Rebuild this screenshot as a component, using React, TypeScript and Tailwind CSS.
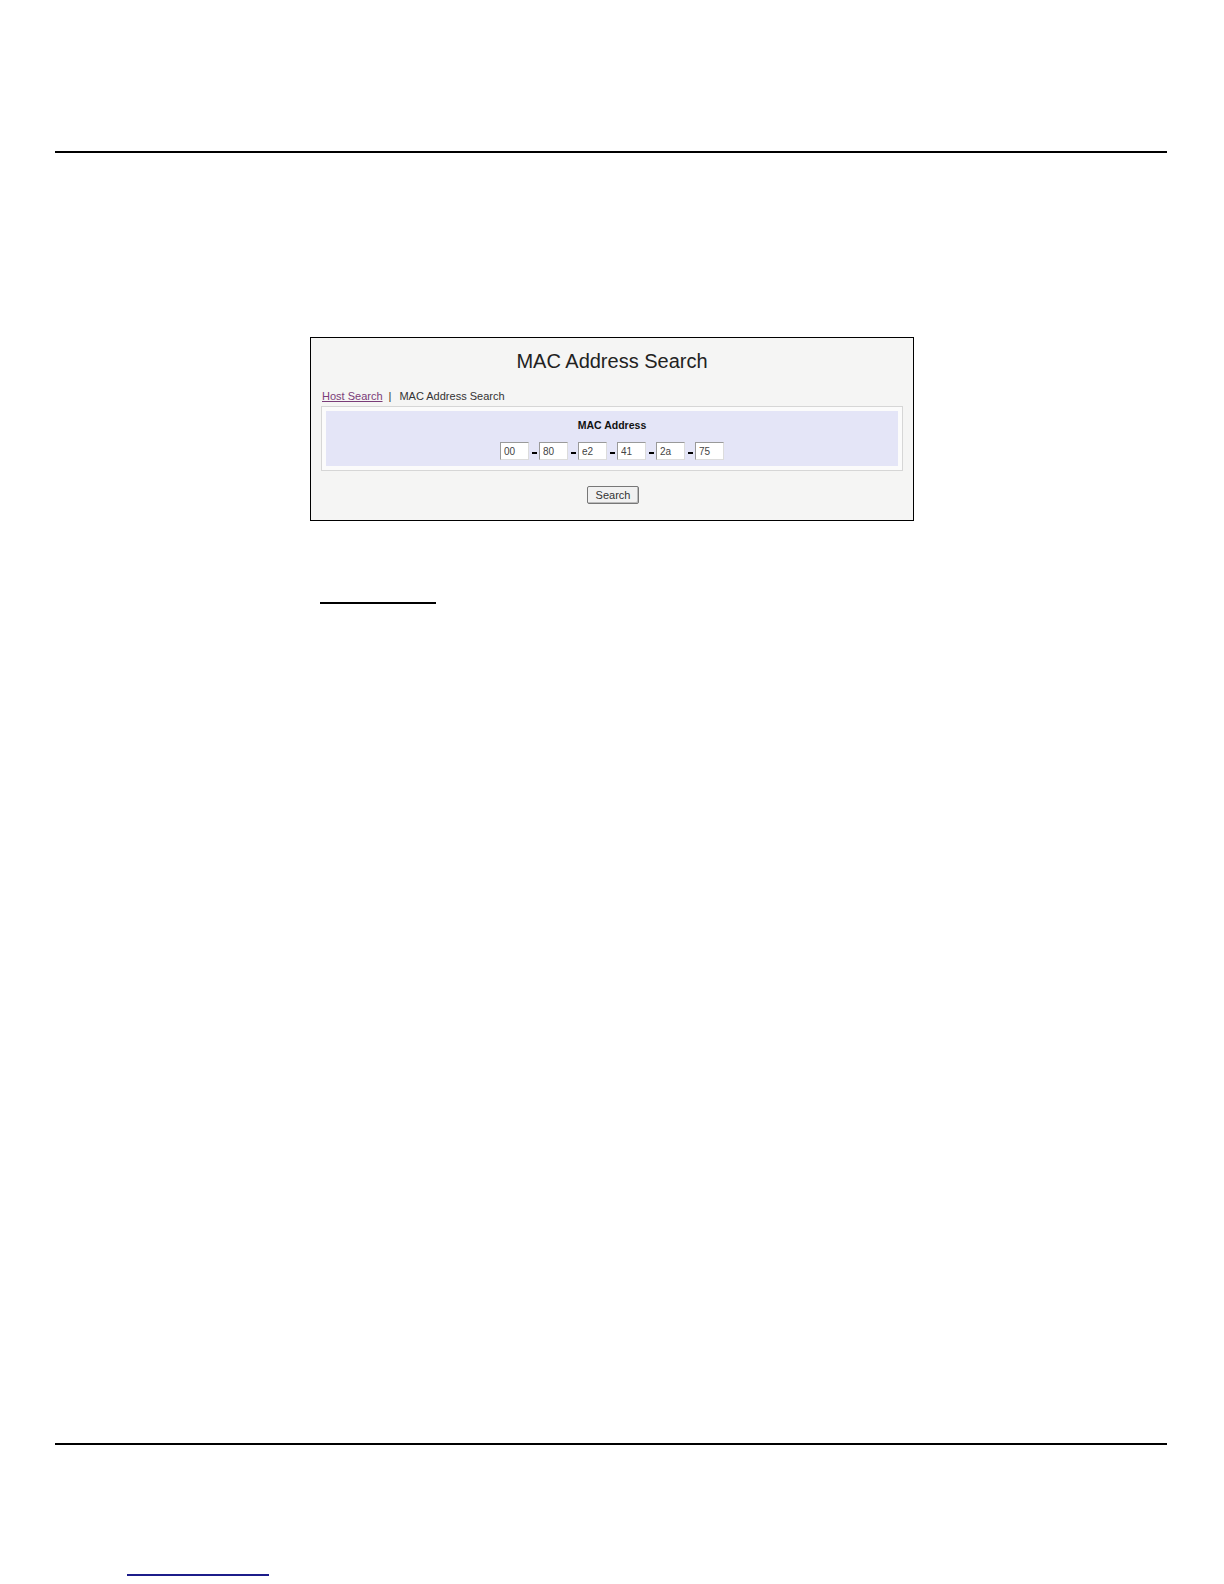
const octets = ['00', '80', 'e2', '41', '2a', '75']

function MacField({ value }: { value: string }) {
  return (
    <input
      readOnly
      value={value}
      className="w-[29px] h-[18px] px-[3px] bg-white border border-t-[#9a9a9a] border-l-[#9a9a9a] border-r-[#dcdcdc] border-b-[#dcdcdc] text-[10px] text-[#444] outline-none"
    />
  )
}

function SearchPanel() {
  return (
    <div className="ml-[310px] mt-[184px] w-[604px] h-[184px] border border-black bg-[#f5f5f4] font-['Liberation_Sans',Arial,sans-serif]">
      <h1 className="pt-[11px] text-center text-[20px] leading-[24px] text-[#222]">MAC Address Search</h1>

      <div className="mt-[16px] pl-[11px] flex items-center text-[11px] leading-[14px] text-[#333]">
        <span className="text-[#7a3c78] underline">Host Search</span>
        <span className="ml-[6px]">|</span>
        <span className="ml-[8px]">MAC Address Search</span>
      </div>

      <div className="mt-[3px] mx-[10px] p-[4px] bg-[#fbfbfb] border border-[#d6d6d6]">
        <div className="bg-[#e4e5f7] pt-[7px] pb-[6px] flex flex-col items-center">
          <div className="text-[10.5px] leading-[14px] font-bold text-[#111]">MAC Address</div>
          <div className="mt-[10px] flex items-center">
            {octets.map((o, i) => (
              <div key={i} className="flex items-center">
                {i > 0 && (
                  <span className="w-[10px] flex justify-center pt-[4px]">
                    <span className="block w-[5px] h-[2px] bg-black" />
                  </span>
                )}
                <MacField value={o} />
              </div>
            ))}
          </div>
        </div>
      </div>

      <div className="mt-[15px] flex justify-center pl-[2px]">
        <button className="w-[52px] h-[18px] rounded-[2px] border border-[#777] bg-[#f1f1f1] text-[11px] leading-[16px] text-[#333] shadow-[inset_-1px_-1px_0_#bbb]">
          Search
        </button>
      </div>
    </div>
  )
}

export default function App() {
  return (
    <div className="w-[1224px] h-[1584px] bg-white overflow-hidden">
      <div className="pt-[151px] pl-[55px]">
        <div className="w-[1112px] h-[2px] bg-black" />
      </div>

      <SearchPanel />

      <div className="ml-[320px] mt-[81px] w-[116px] h-[2px] bg-black" />

      <div className="ml-[55px] mt-[839px] w-[1112px] h-[2px] bg-black" />

      <div className="ml-[127px] mt-[129px] w-[142px] h-[2px] bg-[#1c1c8a]" />
    </div>
  )
}
